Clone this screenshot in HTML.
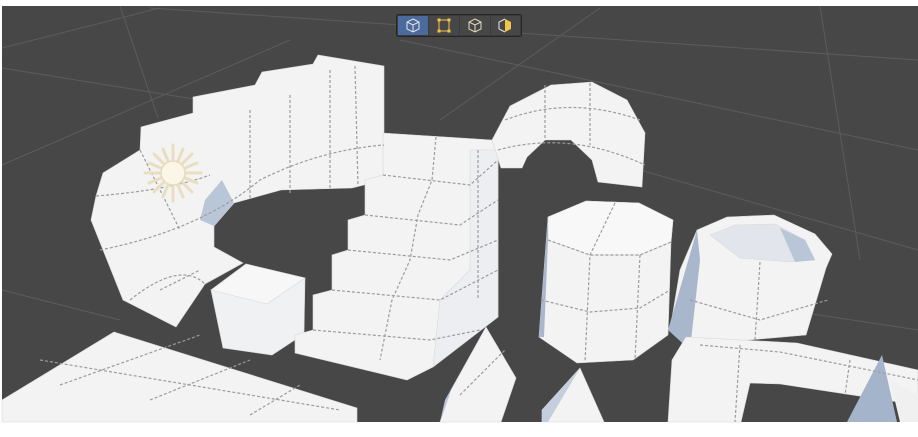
<!DOCTYPE html>
<html><head><meta charset="utf-8"><style>
html,body{margin:0;padding:0;background:#fff;width:918px;height:437px;overflow:hidden}
svg{display:block}
</style></head><body>
<svg width="918" height="437" viewBox="0 0 918 437" xmlns="http://www.w3.org/2000/svg">
<rect x="0" y="0" width="918" height="437" fill="#fff"/>
<rect x="2" y="6" width="916" height="416" fill="#474747"/>
<g stroke="#5c5c5c" stroke-width="1" fill="none">
<line x1="120" y1="6" x2="158" y2="118"/>
<line x1="2" y1="48" x2="160" y2="8"/>
<line x1="2" y1="68" x2="200" y2="100"/>
<line x1="2" y1="165" x2="290" y2="40"/>
<line x1="150" y1="8" x2="918" y2="60"/>
<line x1="400" y1="40" x2="918" y2="150"/>
<line x1="600" y1="8" x2="440" y2="120"/>
<line x1="820" y1="6" x2="860" y2="260"/>
<line x1="640" y1="170" x2="918" y2="250"/>
<line x1="2" y1="290" x2="120" y2="320"/>
<line x1="720" y1="300" x2="918" y2="330"/>
</g>
<g stroke="#d8d8d8" stroke-width="0.6" fill="#f3f3f4">
<polygon points="2,400 114,332 357,408 357,422 2,422"/>
<path fill-rule="evenodd" d="M176,327 L123,300 L91,220 L96,196 L103,173 L140,150 L141,127 L193,113 L193,97 L255,85 L262,72 L313,64 L318,55 L384,66 L384,180 L352,188 L281,190 L234,203 L214,226 L214,247 L243,263 L205,284 Z"/>
<polygon points="211,290 246,264 305,278 304,334 272,355 223,348" fill="#f0f1f3"/>
<polygon points="211,290 246,264 305,278 267,304" fill="#f7f7f7"/>
<!-- stairs -->
<polygon points="383,133 492,140 498,150 498,317 433,367 407,380 295,353 295,335 313,330 313,295 332,290 332,255 348,250 348,220 365,215 365,180 383,175"/>
<polygon points="470,150 498,150 498,317 433,367 440,300 470,270" fill="#eceef1"/>
<!-- arch -->
<path d="M501,168 L492,140 L510,106 L551,85 L592,82 L627,100 L645,133 L642,187 L598,182 L592,160 L571,140 L545,140 L527,157 L522,168 Z"/>
<!-- cylinder -->
<polygon points="548,217 586,201 639,203 673,220 671,242 668,335 633,360 577,363 539,337"/>
<polygon points="548,217 586,201 639,203 673,220 671,242 640,255 590,255 548,240" fill="#f8f8f8"/>
<polygon points="548,217 548,240 544,337 539,337" fill="#a9b7cc" stroke="none"/>
<!-- tube -->
<polygon points="697,230 727,217 774,215 815,234 832,254 826,268 806,335 690,345 670,330 680,270"/>
<polygon points="668,330 697,230 700,260 690,350" fill="#a9b7cc" stroke="none"/>
<polygon points="710,235 735,225 775,224 805,240 815,260 790,262 740,258" fill="#e2e6ec"/>
<polygon points="780,228 805,240 815,260 795,262" fill="#b9c6d8" stroke="none"/>
<!-- beam -->
<polygon points="686,337 797,343 918,370 918,405 780,384 750,383 741,422 668,422 672,360"/>
<polygon points="486,327 516,378 501,422 440,422 451,390"/>
<polygon points="486,327 451,390 440,422 445,400" fill="#b9c6d8" stroke="none"/>
<polygon points="580,368 604,422 542,422 542,410"/>
<polygon points="580,368 542,410 542,422 548,422" fill="#c4cedc" stroke="none"/>
<polygon points="882,355 897,422 847,422" fill="#a4b4ca" stroke="none"/>
<polygon points="890,380 918,395 918,422 900,422" fill="#f0f0f0" stroke="none"/>
</g>
<path d="M214,226 L234,203 L222,180 L205,200 L200,220 Z" fill="#b9c6d8"/>
<g stroke="#9c9c9c" stroke-width="1.2" stroke-dasharray="3,2" fill="none">
<path d="M100,250 Q200,230 260,180 Q320,150 384,145"/>
<path d="M130,300 Q180,260 205,284"/>
<path d="M96,196 Q170,190 210,175"/>
<path d="M330,70 L330,190"/><path d="M290,95 L290,195"/><path d="M250,110 L250,200"/><path d="M355,66 L358,186"/>
<path d="M140,150 L180,230"/><path d="M160,290 L200,270"/>
<path d="M383,175 L470,185 L498,160"/><path d="M365,215 L460,225 L498,200"/><path d="M348,250 L450,260 L498,240"/><path d="M332,290 L440,300 L498,270"/><path d="M313,330 L430,340 L480,330"/>
<path d="M436,137 L432,180 L418,215 L410,260 L392,300 L380,360"/><path d="M478,150 L478,300"/>
<path d="M505,120 Q570,95 640,120"/><path d="M498,150 Q570,130 645,165"/><path d="M545,85 L545,140"/><path d="M590,83 L590,145"/>
<path d="M548,240 L590,255 L640,255 L671,242"/><path d="M541,300 L590,312 L640,308 L670,290"/><path d="M615,203 L590,255 L585,362"/><path d="M640,255 L635,360"/>
<path d="M690,300 L760,320 L828,300"/><path d="M760,262 L755,340"/><path d="M700,345 L780,352 L918,380"/><path d="M740,345 L735,422"/><path d="M850,360 L845,395"/>
<path d="M40,360 L340,410"/><path d="M60,385 L200,335"/><path d="M150,400 L250,360"/><path d="M250,415 L300,385"/>
<path d="M460,395 L505,350"/>
</g>
<g transform="translate(173,173)" stroke="#e9dfc0" stroke-width="3" stroke-linecap="round">
<line x1="0" y1="-28" x2="0" y2="28"/><line x1="-28" y1="0" x2="28" y2="0"/>
<line x1="-19" y1="-19" x2="19" y2="19"/><line x1="-19" y1="19" x2="19" y2="-19"/>
<line x1="-10" y1="-24" x2="10" y2="24"/><line x1="10" y1="-24" x2="-10" y2="24"/>
<line x1="-24" y1="-10" x2="24" y2="10"/><line x1="-24" y1="10" x2="24" y2="-10"/>
<circle r="12" fill="#fbf6e8" stroke="#e6dcbc" stroke-width="1.5"/>
</g>
<rect x="396.5" y="14.5" width="125" height="22" rx="2" fill="#3b3b3b" stroke="#262626"/>
<rect x="398" y="16" width="30" height="19" fill="#4b6b9c"/>
<rect x="429" y="16" width="30" height="19" fill="#474747"/>
<rect x="460" y="16" width="30" height="19" fill="#474747"/>
<rect x="491" y="16" width="29" height="19" fill="#474747"/>
<g fill="none" stroke="#e8e8e8" stroke-width="1">
<path d="M413,19 L419,22 L419,29 L413,32 L407,29 L407,22 Z M407,22 L413,25 L419,22 M413,25 L413,32"/>
</g>
<g fill="none" stroke="#f0c64a" stroke-width="1"><rect x="439" y="20" width="10" height="11"/></g>
<g fill="#f0c64a"><rect x="437.5" y="18.5" width="3" height="3"/><rect x="447.5" y="18.5" width="3" height="3"/><rect x="437.5" y="29.5" width="3" height="3"/><rect x="447.5" y="29.5" width="3" height="3"/></g>
<g fill="none" stroke="#e8dcc0" stroke-width="1">
<path d="M475,19 L481,22 L481,29 L475,32 L469,29 L469,22 Z M469,22 L475,25 L481,22 M475,25 L475,32"/>
</g>
<path d="M505,19 L511,22 L511,29 L505,32 Z" fill="#f0c64a"/>
<path d="M505,19 L499,22 L499,29 L505,32" fill="none" stroke="#e8e8e8"/>
</svg>
</body></html>
